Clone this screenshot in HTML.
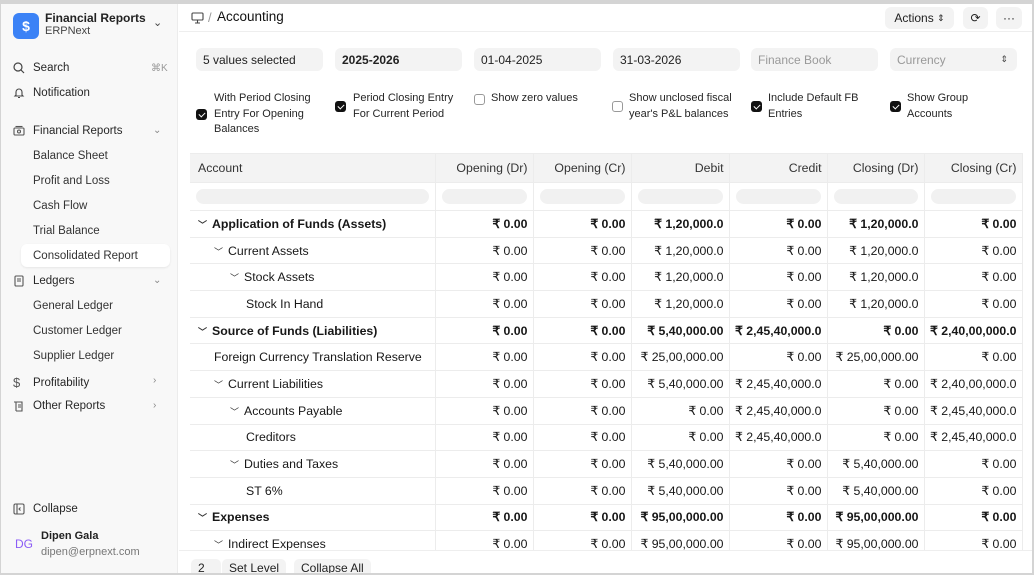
<!DOCTYPE html>
<html><head><meta charset="utf-8"><style>
*{box-sizing:border-box;margin:0;padding:0}
body{width:1034px;height:575px;overflow:hidden;background:#d4d4d4;font-family:"Liberation Sans",sans-serif;color:#171717;position:relative}
#app{position:absolute;left:1px;top:4px;width:1031px;height:569px;background:#fff;overflow:hidden}
#side{position:absolute;left:0;top:0;width:177px;height:569px;background:#f8f8f8;border-right:1px solid #ececec}
.si{position:absolute;left:12px;font-size:11.5px;color:#262626;display:flex;align-items:center}
.si svg{margin-right:8px}
.sub{position:absolute;left:32px;font-size:11.5px;color:#333}
.chev{position:absolute;left:152px;color:#888;font-size:10px}
#main{position:absolute;left:178px;top:0;right:0;bottom:0}
.hdr{height:28px;border-bottom:1px solid #eee;position:relative}
.btn{position:absolute;background:#f3f3f3;border-radius:6px;height:22px;top:3px;font-size:12px;display:flex;align-items:center;justify-content:center;color:#222}
.inp{position:absolute;top:44px;height:23px;background:#f3f3f3;border-radius:6px;font-size:12px;padding-left:7px;display:flex;align-items:center;color:#222}
.cb{position:absolute;font-size:11px;line-height:15.5px;color:#262626}
.box{position:absolute;width:11px;height:11px;border-radius:3px}
.on{background:#111}
.on:after{content:"";position:absolute;left:3.5px;top:1.5px;width:3px;height:5px;border:solid #fff;border-width:0 1.3px 1.3px 0;transform:rotate(45deg)}
.off{border:1px solid #999;background:#fff}
table{position:absolute;left:11px;top:149px;border-collapse:collapse;font-size:12.3px;table-layout:fixed;width:832px}
td,th{border:1px solid #ececec;height:26.7px;padding:0 5px;white-space:nowrap;overflow:hidden;text-align:right;font-weight:normal}
th{background:#f3f3f3;height:29px;color:#333}
td:first-child,th:first-child{text-align:left;padding-left:8px;border-left:none}
tr.f td{height:28px;padding:0 6px}
.pill{height:15px;background:#f1f1f1;border-radius:8px}
tr.b td{font-weight:bold}
.ar{display:inline-block;font-size:9px;margin-right:5px;color:#333}
#foot{position:absolute;left:0;top:546px;right:0;height:23px;background:#fff;border-top:1px solid #eee}
.fb{position:absolute;top:8px;height:18px;background:#f3f3f3;border-radius:5px;font-size:12px;padding:2px 7px;color:#222}
</style></head><body><div id="app">
<div id="side">
 <div style="position:absolute;left:12px;top:9px;width:26px;height:26px;background:#3b82f6;border-radius:6px;color:#fff;font-size:14px;font-weight:bold;text-align:center;line-height:26px">$</div>
 <div style="position:absolute;left:44px;top:7px;font-size:12px;font-weight:bold;color:#222">Financial Reports</div>
 <div style="position:absolute;left:44px;top:21px;font-size:11px;color:#444">ERPNext</div>
 <div style="position:absolute;left:152px;top:12px;font-size:11px;color:#444">⌄</div>
 <div class="si" style="top:58px"><svg width="12" height="12" viewBox="0 0 12 12" fill="none" stroke="#444" stroke-width="1.2"><circle cx="5" cy="5" r="4"/><path d="M8 8l3 3"/></svg>Search</div>
 <div style="position:absolute;left:150px;top:59px;font-size:10px;color:#999">⌘K</div>
 <div class="si" style="top:83px"><svg width="12" height="12" viewBox="0 0 12 12" fill="none" stroke="#444" stroke-width="1.1"><path d="M3 8V5a3 3 0 016 0v3l1 1H2z M5 10.5h2"/></svg>Notification</div>
 <div class="si" style="top:121px"><svg width="12" height="12" viewBox="0 0 12 12" fill="none" stroke="#555" stroke-width="1.1"><rect x="1" y="3" width="10" height="7" rx="1"/><path d="M2.5 1.5h7"/><circle cx="6" cy="6.5" r="1.5"/></svg>Financial Reports</div>
 <div class="chev" style="top:121px">⌄</div>
 <div class="sub" style="top:146px">Balance Sheet</div>
 <div class="sub" style="top:171px">Profit and Loss</div>
 <div class="sub" style="top:196px">Cash Flow</div>
 <div class="sub" style="top:221px">Trial Balance</div>
 <div style="position:absolute;left:20px;top:240px;width:149px;height:23px;background:#fff;border-radius:6px;box-shadow:0 1px 2px rgba(0,0,0,.08)"></div>
 <div class="sub" style="top:246px">Consolidated Report</div>
 <div class="si" style="top:271px"><svg width="12" height="12" viewBox="0 0 12 12" fill="none" stroke="#555" stroke-width="1.1"><rect x="2" y="1" width="8" height="10" rx="1"/><path d="M4 4h4M4 6h4"/></svg>Ledgers</div>
 <div class="chev" style="top:271px">⌄</div>
 <div class="sub" style="top:296px">General Ledger</div>
 <div class="sub" style="top:321px">Customer Ledger</div>
 <div class="sub" style="top:346px">Supplier Ledger</div>
 <div class="si" style="top:371px"><span style="width:12px;margin-right:8px;font-size:13px;color:#555">$</span>Profitability</div>
 <div class="chev" style="top:371px">›</div>
 <div class="si" style="top:396px"><svg width="12" height="12" viewBox="0 0 12 12" fill="none" stroke="#555" stroke-width="1.1"><path d="M1 2h8v9H3M3 2v9M5 5h3M5 7h3"/></svg>Other Reports</div>
 <div class="chev" style="top:396px">›</div>
 <div class="si" style="top:499px"><svg width="12" height="12" viewBox="0 0 12 12" fill="none" stroke="#555" stroke-width="1.1"><rect x="1" y="1" width="10" height="10" rx="1.5"/><path d="M4 1v10M7.5 4.5L6 6l1.5 1.5"/></svg>Collapse</div>
 <div style="position:absolute;left:14px;top:533px;font-size:12px;color:#8b5cf6">DG</div>
 <div style="position:absolute;left:40px;top:526px;font-size:11px;font-weight:bold;color:#222">Dipen Gala</div>
 <div style="position:absolute;left:40px;top:542px;font-size:11px;color:#777">dipen@erpnext.com</div>
</div>
<div id="main">
 <div class="hdr">
  <svg style="position:absolute;left:12px;top:8px" width="13" height="12" viewBox="0 0 13 12" fill="none" stroke="#444" stroke-width="1.1"><rect x="1" y="1" width="11" height="7" rx="1"/><path d="M6.5 8v2.5M4 11h5"/></svg>
  <span style="position:absolute;left:29px;top:6px;font-size:13px;color:#999">/</span>
  <span style="position:absolute;left:38px;top:5px;font-size:13.5px;color:#111">Accounting</span>
  <div class="btn" style="left:706px;width:69px">Actions&nbsp;<span style="font-size:9px">⇕</span></div>
  <div class="btn" style="left:784px;width:25px">⟳</div>
  <div class="btn" style="left:817px;width:26px">···</div>
 </div>
 <div class="inp" style="left:17px;width:127px;top:44px">5 values selected</div>
 <div class="inp" style="left:156px;width:127px;font-weight:bold">2025-2026</div>
 <div class="inp" style="left:295px;width:127px">01-04-2025</div>
 <div class="inp" style="left:434px;width:127px">31-03-2026</div>
 <div class="inp" style="left:572px;width:127px;color:#999">Finance Book</div>
 <div class="inp" style="left:711px;width:127px;color:#999">Currency<span style="position:absolute;right:9px;color:#444;font-size:9px">⇕</span></div>
 <div class="box on" style="left:17px;top:105px"></div><div class="cb" style="left:35px;top:87px">With Period Closing<br>Entry For Opening<br>Balances</div>
 <div class="box on" style="left:156px;top:97px"></div><div class="cb" style="left:174px;top:87px">Period Closing Entry<br>For Current Period</div>
 <div class="box off" style="left:295px;top:90px"></div><div class="cb" style="left:312px;top:87px">Show zero values</div>
 <div class="box off" style="left:433px;top:97px"></div><div class="cb" style="left:450px;top:87px">Show unclosed fiscal<br>year's P&amp;L balances</div>
 <div class="box on" style="left:572px;top:97px"></div><div class="cb" style="left:589px;top:87px">Include Default FB<br>Entries</div>
 <div class="box on" style="left:711px;top:97px"></div><div class="cb" style="left:728px;top:87px">Show Group<br>Accounts</div>
 <table>
  <colgroup><col style="width:245px"><col style="width:98px"><col style="width:98px"><col style="width:98px"><col style="width:98px"><col style="width:97px"><col style="width:98px"></colgroup>
  <tr><th>Account</th><th>Opening (Dr)</th><th>Opening (Cr)</th><th>Debit</th><th>Credit</th><th>Closing (Dr)</th><th>Closing (Cr)</th></tr>
  <tr class="f"><td><div class="pill"></div></td><td><div class="pill"></div></td><td><div class="pill"></div></td><td><div class="pill"></div></td><td><div class="pill"></div></td><td><div class="pill"></div></td><td><div class="pill"></div></td></tr>
  <tr class="b"><td><span class="ar">﹀</span>Application of Funds (Assets)</td><td>₹ 0.00</td><td>₹ 0.00</td><td>₹ 1,20,000.0</td><td>₹ 0.00</td><td>₹ 1,20,000.0</td><td>₹ 0.00</td></tr>
  <tr><td style="padding-left:24px"><span class="ar">﹀</span>Current Assets</td><td>₹ 0.00</td><td>₹ 0.00</td><td>₹ 1,20,000.0</td><td>₹ 0.00</td><td>₹ 1,20,000.0</td><td>₹ 0.00</td></tr>
  <tr><td style="padding-left:40px"><span class="ar">﹀</span>Stock Assets</td><td>₹ 0.00</td><td>₹ 0.00</td><td>₹ 1,20,000.0</td><td>₹ 0.00</td><td>₹ 1,20,000.0</td><td>₹ 0.00</td></tr>
  <tr><td style="padding-left:56px">Stock In Hand</td><td>₹ 0.00</td><td>₹ 0.00</td><td>₹ 1,20,000.0</td><td>₹ 0.00</td><td>₹ 1,20,000.0</td><td>₹ 0.00</td></tr>
  <tr class="b"><td><span class="ar">﹀</span>Source of Funds (Liabilities)</td><td>₹ 0.00</td><td>₹ 0.00</td><td>₹ 5,40,000.00</td><td>₹ 2,45,40,000.0</td><td>₹ 0.00</td><td>₹ 2,40,00,000.0</td></tr>
  <tr><td style="padding-left:24px">Foreign Currency Translation Reserve</td><td>₹ 0.00</td><td>₹ 0.00</td><td>₹ 25,00,000.00</td><td>₹ 0.00</td><td>₹ 25,00,000.00</td><td>₹ 0.00</td></tr>
  <tr><td style="padding-left:24px"><span class="ar">﹀</span>Current Liabilities</td><td>₹ 0.00</td><td>₹ 0.00</td><td>₹ 5,40,000.00</td><td>₹ 2,45,40,000.0</td><td>₹ 0.00</td><td>₹ 2,40,00,000.0</td></tr>
  <tr><td style="padding-left:40px"><span class="ar">﹀</span>Accounts Payable</td><td>₹ 0.00</td><td>₹ 0.00</td><td>₹ 0.00</td><td>₹ 2,45,40,000.0</td><td>₹ 0.00</td><td>₹ 2,45,40,000.0</td></tr>
  <tr><td style="padding-left:56px">Creditors</td><td>₹ 0.00</td><td>₹ 0.00</td><td>₹ 0.00</td><td>₹ 2,45,40,000.0</td><td>₹ 0.00</td><td>₹ 2,45,40,000.0</td></tr>
  <tr><td style="padding-left:40px"><span class="ar">﹀</span>Duties and Taxes</td><td>₹ 0.00</td><td>₹ 0.00</td><td>₹ 5,40,000.00</td><td>₹ 0.00</td><td>₹ 5,40,000.00</td><td>₹ 0.00</td></tr>
  <tr><td style="padding-left:56px">ST 6%</td><td>₹ 0.00</td><td>₹ 0.00</td><td>₹ 5,40,000.00</td><td>₹ 0.00</td><td>₹ 5,40,000.00</td><td>₹ 0.00</td></tr>
  <tr class="b"><td><span class="ar">﹀</span>Expenses</td><td>₹ 0.00</td><td>₹ 0.00</td><td>₹ 95,00,000.00</td><td>₹ 0.00</td><td>₹ 95,00,000.00</td><td>₹ 0.00</td></tr>
  <tr><td style="padding-left:24px"><span class="ar">﹀</span>Indirect Expenses</td><td>₹ 0.00</td><td>₹ 0.00</td><td>₹ 95,00,000.00</td><td>₹ 0.00</td><td>₹ 95,00,000.00</td><td>₹ 0.00</td></tr>
 </table>
 <div id="foot">
  <div class="fb" style="left:12px;width:30px">2</div>
  <div class="fb" style="left:43px">Set Level</div>
  <div class="fb" style="left:115px">Collapse All</div>
 </div>
</div>
</div></body></html>
